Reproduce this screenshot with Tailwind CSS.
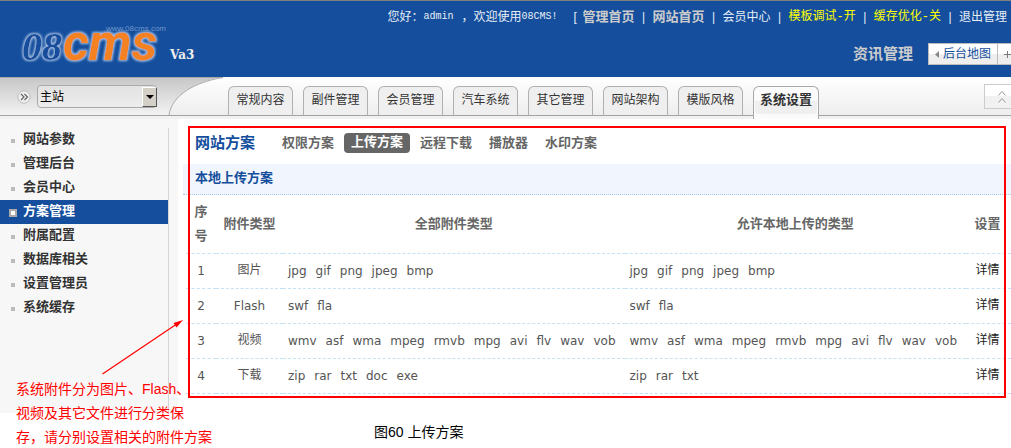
<!DOCTYPE html>
<html lang="zh-CN">
<head>
<meta charset="utf-8">
<title>08CMS 管理后台</title>
<script src="https://cdn.jsdelivr.net/npm/@tailwindcss/browser@4"></script>
</head>
<body class="relative overflow-x-hidden bg-white font-['Liberation_Sans','Noto_Sans_CJK_SC',sans-serif] text-xs text-[#333]">

<header class="flex h-[77px] justify-between border-t border-[#7f7f7f] bg-[#144e9d]">
  <a href="#" class="mt-1 ml-4 flex items-end self-start" aria-label="08CMS Va3">
    <svg width="150" height="70" viewBox="0 0 150 70">
      <defs>
        <filter id="glow" x="-10%" y="-20%" width="120%" height="140%">
          <feMorphology in="SourceAlpha" operator="dilate" radius="1" result="d"/>
          <feGaussianBlur in="d" stdDeviation="1.3" result="b"/>
          <feFlood flood-color="#a9c4e6"/>
          <feComposite in2="b" operator="in" result="g"/>
          <feMerge><feMergeNode in="g"/><feMergeNode in="SourceGraphic"/></feMerge>
        </filter>
      </defs>
      <text x="90" y="26" font-family="Liberation Sans" font-size="8" fill="#6f96cb">www.08cms.com</text>
      <g filter="url(#glow)">
        <text x="6" y="55" font-family="Liberation Serif" font-size="40" font-style="italic" font-weight="700" fill="#144e9d">08</text>
        <text x="47" y="55" font-family="Roboto" font-size="51" font-style="italic" font-weight="700" fill="#f58220">cms</text>
      </g>
    </svg>
    <span class="ml-1 pb-3 font-['DejaVu_Serif'] text-xs leading-4 font-bold text-[#eee]">Va3</span>
  </a>
  <div class="flex flex-col items-end">
    <nav class="mt-1.5 mr-1 flex h-5 items-center leading-5 whitespace-pre text-[#e8eef6]">
      <span>您好：</span><span class="mr-2 font-['Liberation_Mono'] text-[10px]">admin</span><span>，欢迎使用</span><span class="font-['Liberation_Mono'] text-[10px]">08CMS!</span>
      <span class="ml-4 w-[9px]">[</span>
      <a href="#" class="text-[13px] font-bold text-[#ccc]">管理首页</a><span class="w-[18px] text-center">|</span>
      <a href="#" class="text-[13px] font-bold text-[#ccc]">网站首页</a><span class="w-[18px] text-center">|</span>
      <a href="#">会员中心</a><span class="w-[18px] text-center">|</span>
      <a href="#" class="font-['Liberation_Mono','Noto_Sans_CJK_SC',monospace] text-[#ff0]">模板调试-开</a><span class="w-[18px] text-center">|</span>
      <a href="#" class="font-['Liberation_Mono','Noto_Sans_CJK_SC',monospace] text-[#ff0]">缓存优化-关</a><span class="w-[18px] text-center">|</span>
      <a href="#">退出管理</a>
    </nav>
    <div class="mt-4 flex items-center">
      <strong class="mr-[15px] text-[15px] leading-5 text-[#ccc]">资讯管理</strong>
      <button type="button" class="flex h-[22px] w-[70px] items-center justify-center gap-1 border border-[#bbb] bg-linear-to-b from-white from-50% to-[#eee] to-50% text-[#144e9d]">
        <svg width="4" height="7" viewBox="0 0 4 7"><path d="M4 0v7L0 3.500z" fill="#888"/></svg>后台地图</button>
      <button type="button" aria-label="添加" class="flex h-[22px] w-[13px] items-center justify-end border-y border-[#bbb] bg-linear-to-b from-white from-50% to-[#eee] to-50%">
        <svg width="7" height="7" viewBox="0 0 7 7"><path d="M0 3.500h7M3.500 0v7" stroke="#777"/></svg></button>
    </div>
  </div>
</header>

<div class="relative flex h-[42px] items-start bg-linear-to-b from-white to-[#ececec]">
  <svg class="absolute top-0 left-0" width="224" height="38" viewBox="0 0 224 38" aria-hidden="true">
    <defs><linearGradient id="bar" x1="0" y1="0" x2="0" y2="1"><stop offset="0" stop-color="#c6c6c6"/><stop offset="1" stop-color="#f3f3f3"/></linearGradient></defs>
    <path d="M0 0H224C196 4 172 18 169 38H0z" fill="url(#bar)"/>
    <path d="M0 .5H223C195 5 172 18 169 38" fill="none" stroke="#aaa"/>
  </svg>
  <div class="absolute inset-x-0 bottom-0 h-1 border-t border-[#a3a3a3] bg-[#f1f1f1]"></div>
  <div class="relative flex w-[228px] shrink-0 items-center pt-2 pl-[17px]">
    <svg width="14" height="14" viewBox="0 0 14 14" aria-hidden="true"><circle cx="7" cy="7" r="6.200" fill="#efefef" stroke="#aaa" stroke-width=".7"/><path d="M4 4l3 3-3 3M7.500 4l3 3-3 3" fill="none" stroke="#666" stroke-width="1.200"/></svg>
    <div class="relative ml-1.5">
      <select aria-label="站点" class="h-[23px] w-[120px] appearance-none rounded-sm border border-[#aaa] bg-[#eee]/60 pl-0.5 text-xs leading-5 text-black"><option>主站</option></select>
      <span class="pointer-events-none absolute top-0.5 right-0 flex h-5 w-[15px] items-center justify-center border border-t-white border-r-[#555] border-b-[#555] border-l-white bg-[#d4d0c8]">
        <svg width="8" height="4" viewBox="0 0 8 4"><path d="M0 0h8L4 4z"/></svg>
      </span>
    </div>
  </div>
  <nav class="relative flex gap-2.5 pt-[9px] leading-[26px]">
    <a href="#" class="h-[29px] w-[65px] rounded-t-md border border-b-0 border-[#b0b0b0] bg-[#efefef] text-center">常规内容</a>
    <a href="#" class="h-[29px] w-[65px] rounded-t-md border border-b-0 border-[#b0b0b0] bg-[#efefef] text-center">副件管理</a>
    <a href="#" class="h-[29px] w-[65px] rounded-t-md border border-b-0 border-[#b0b0b0] bg-[#efefef] text-center">会员管理</a>
    <a href="#" class="h-[29px] w-[65px] rounded-t-md border border-b-0 border-[#b0b0b0] bg-[#efefef] text-center">汽车系统</a>
    <a href="#" class="h-[29px] w-[65px] rounded-t-md border border-b-0 border-[#b0b0b0] bg-[#efefef] text-center">其它管理</a>
    <a href="#" class="h-[29px] w-[65px] rounded-t-md border border-b-0 border-[#b0b0b0] bg-[#efefef] text-center">网站架构</a>
    <a href="#" class="h-[29px] w-[65px] rounded-t-md border border-b-0 border-[#b0b0b0] bg-[#efefef] text-center">模版风格</a>
    <a href="#" class="h-[33px] w-[66px] rounded-t-md border border-b-0 border-[#a8a8a8] bg-[#fbfbfb] p-px text-center"><span class="block h-[26px] rounded bg-linear-to-b from-[#fbfbfb] from-50% to-[#efefef] to-50% text-[13px] leading-6 font-bold">系统设置</span></a>
  </nav>
  <button type="button" aria-label="收起" class="relative mt-[7px] ml-auto flex h-[25px] w-[27px] items-center justify-center border border-r-0 border-[#ccc] bg-linear-to-b from-white from-50% to-[#f1f1f1] to-50% pl-2">
    <svg width="8" height="14" viewBox="0 0 8 14"><path d="M.5 5.500L4 1.500l3.500 4M.5 12.500L4 8.500l3.500 4" fill="none" stroke="#999"/></svg>
  </button>
</div>

<div class="flex">
  <aside class="w-[178px] shrink-0 bg-[#f7f7f7] pt-[9px] pr-[9px]">
    <nav class="h-[285px] border-r border-[#d5d5d5] text-[13px] leading-6 font-bold">
      <a href="#" class="flex h-6 items-center pb-0.5 pl-[11px]"><i class="mt-1 mr-2 size-1 bg-[#bbb]"></i>网站参数</a>
      <a href="#" class="flex h-6 items-center pb-0.5 pl-[11px]"><i class="mt-1 mr-2 size-1 bg-[#bbb]"></i>管理后台</a>
      <a href="#" class="flex h-6 items-center pb-0.5 pl-[11px]"><i class="mt-1 mr-2 size-1 bg-[#bbb]"></i>会员中心</a>
      <a href="#" class="flex h-6 items-center bg-[#144e9d] pb-0.5 pl-[9px] text-white"><i class="mt-1 mr-1.5 size-2 border-2 border-[#aaa] bg-white"></i>方案管理</a>
      <a href="#" class="flex h-6 items-center pb-0.5 pl-[11px]"><i class="mt-1 mr-2 size-1 bg-[#bbb]"></i>附属配置</a>
      <a href="#" class="flex h-6 items-center pb-0.5 pl-[11px]"><i class="mt-1 mr-2 size-1 bg-[#bbb]"></i>数据库相关</a>
      <a href="#" class="flex h-6 items-center pb-0.5 pl-[11px]"><i class="mt-1 mr-2 size-1 bg-[#bbb]"></i>设置管理员</a>
      <a href="#" class="flex h-6 items-center pb-0.5 pl-[11px]"><i class="mt-1 mr-2 size-1 bg-[#bbb]"></i>系统缓存</a>
    </nav>
  </aside>

  <main class="relative flex-1 self-start pl-[5px]">
    <nav class="flex h-[45px] items-center gap-[3px] pt-[3px] pl-3 text-[13px] leading-5 font-bold text-[#666]">
      <h1 class="mr-[17px] text-[15px] text-[#144e9d]">网站方案</h1>
      <a href="#" class="px-[7px]">权限方案</a>
      <a href="#" class="h-5 rounded-sm bg-[#666] px-[7px] leading-[18px] text-white">上传方案</a>
      <a href="#" class="px-[7px]">远程下载</a>
      <a href="#" class="px-[7px]">播放器</a>
      <a href="#" class="px-[7px]">水印方案</a>
    </nav>
    <h2 class="h-[31px] border-b border-dotted border-[#a9cdea] bg-[#f1f6fe] pl-3 text-[13px] leading-[28px] font-bold text-[#144e9d]">本地上传方案</h2>
    <div class="pl-[3px]">
    <table class="w-full table-fixed border-collapse text-[#555]">
      <colgroup><col class="w-[30px]"><col class="w-[67px]"><col><col><col class="w-[45px]"></colgroup>
      <thead>
        <tr class="h-[58px] border-b border-dashed border-[#c5e1f5] text-[13px] leading-6 text-[#666]">
          <th class="px-2">序号</th><th class="whitespace-nowrap">附件类型</th><th>全部附件类型</th><th>允许本地上传的类型</th><th class="pr-0.5">设置</th>
        </tr>
      </thead>
      <tbody class="font-['DejaVu_Sans','Noto_Sans_CJK_SC',sans-serif] text-xs leading-5">
        <tr class="h-[35px] border-b border-dashed border-[#c5e1f5]">
          <td class="text-center">1</td><td class="pb-0.5 text-center">图片</td>
          <td class="pl-[5px]"><div class="flex gap-[9px]"><span>jpg</span><span>gif</span><span>png</span><span>jpeg</span><span>bmp</span></div></td>
          <td class="pl-[5px]"><div class="flex gap-[9px]"><span>jpg</span><span>gif</span><span>png</span><span>jpeg</span><span>bmp</span></div></td>
          <td class="pr-0.5 pb-0.5 text-center text-[#222]"><a href="#">详情</a></td>
        </tr>
        <tr class="h-[35px] border-b border-dashed border-[#c5e1f5]">
          <td class="text-center">2</td><td class="text-center">Flash</td>
          <td class="pl-[5px]"><div class="flex gap-[9px]"><span>swf</span><span>fla</span></div></td>
          <td class="pl-[5px]"><div class="flex gap-[9px]"><span>swf</span><span>fla</span></div></td>
          <td class="pr-0.5 pb-0.5 text-center text-[#222]"><a href="#">详情</a></td>
        </tr>
        <tr class="h-[35px] border-b border-dashed border-[#c5e1f5]">
          <td class="text-center">3</td><td class="pb-0.5 text-center">视频</td>
          <td class="pl-[5px]"><div class="flex gap-[9px]"><span>wmv</span><span>asf</span><span>wma</span><span>mpeg</span><span>rmvb</span><span>mpg</span><span>avi</span><span>flv</span><span>wav</span><span>vob</span></div></td>
          <td class="pl-[5px]"><div class="flex gap-[9px]"><span>wmv</span><span>asf</span><span>wma</span><span>mpeg</span><span>rmvb</span><span>mpg</span><span>avi</span><span>flv</span><span>wav</span><span>vob</span></div></td>
          <td class="pr-0.5 pb-0.5 text-center text-[#222]"><a href="#">详情</a></td>
        </tr>
        <tr class="h-[35px] border-b border-dashed border-[#c5e1f5]">
          <td class="text-center">4</td><td class="pb-0.5 text-center">下载</td>
          <td class="pl-[5px]"><div class="flex gap-[9px]"><span>zip</span><span>rar</span><span>txt</span><span>doc</span><span>exe</span></div></td>
          <td class="pl-[5px]"><div class="flex gap-[9px]"><span>zip</span><span>rar</span><span>txt</span></div></td>
          <td class="pr-0.5 pb-0.5 text-center text-[#222]"><a href="#">详情</a></td>
        </tr>
      </tbody>
    </table>
    </div>
    <div class="pointer-events-none absolute top-[7px] right-[5px] -bottom-1 left-2.5 border-2 border-[#f00]"></div>
  </main>
</div>

<p class="pt-2 pb-1 pl-[374px] text-sm leading-[23px] text-black">图60 上传方案</p>

<svg class="absolute top-[318px] left-[100px]" width="86" height="58" viewBox="0 0 86 58" aria-hidden="true">
  <path d="M2.500 56L76 6.500" stroke="#f00" stroke-width="1.200"/><path d="M83 2L73.500 5l3 4.500z" fill="#f00"/>
</svg>
<p class="absolute top-[377px] left-4 text-sm leading-6 whitespace-nowrap text-[#f00]">系统附件分为图片、Flash、<br>视频及其它文件进行分类保<br>存，请分别设置相关的附件方案</p>

</body>
</html>
